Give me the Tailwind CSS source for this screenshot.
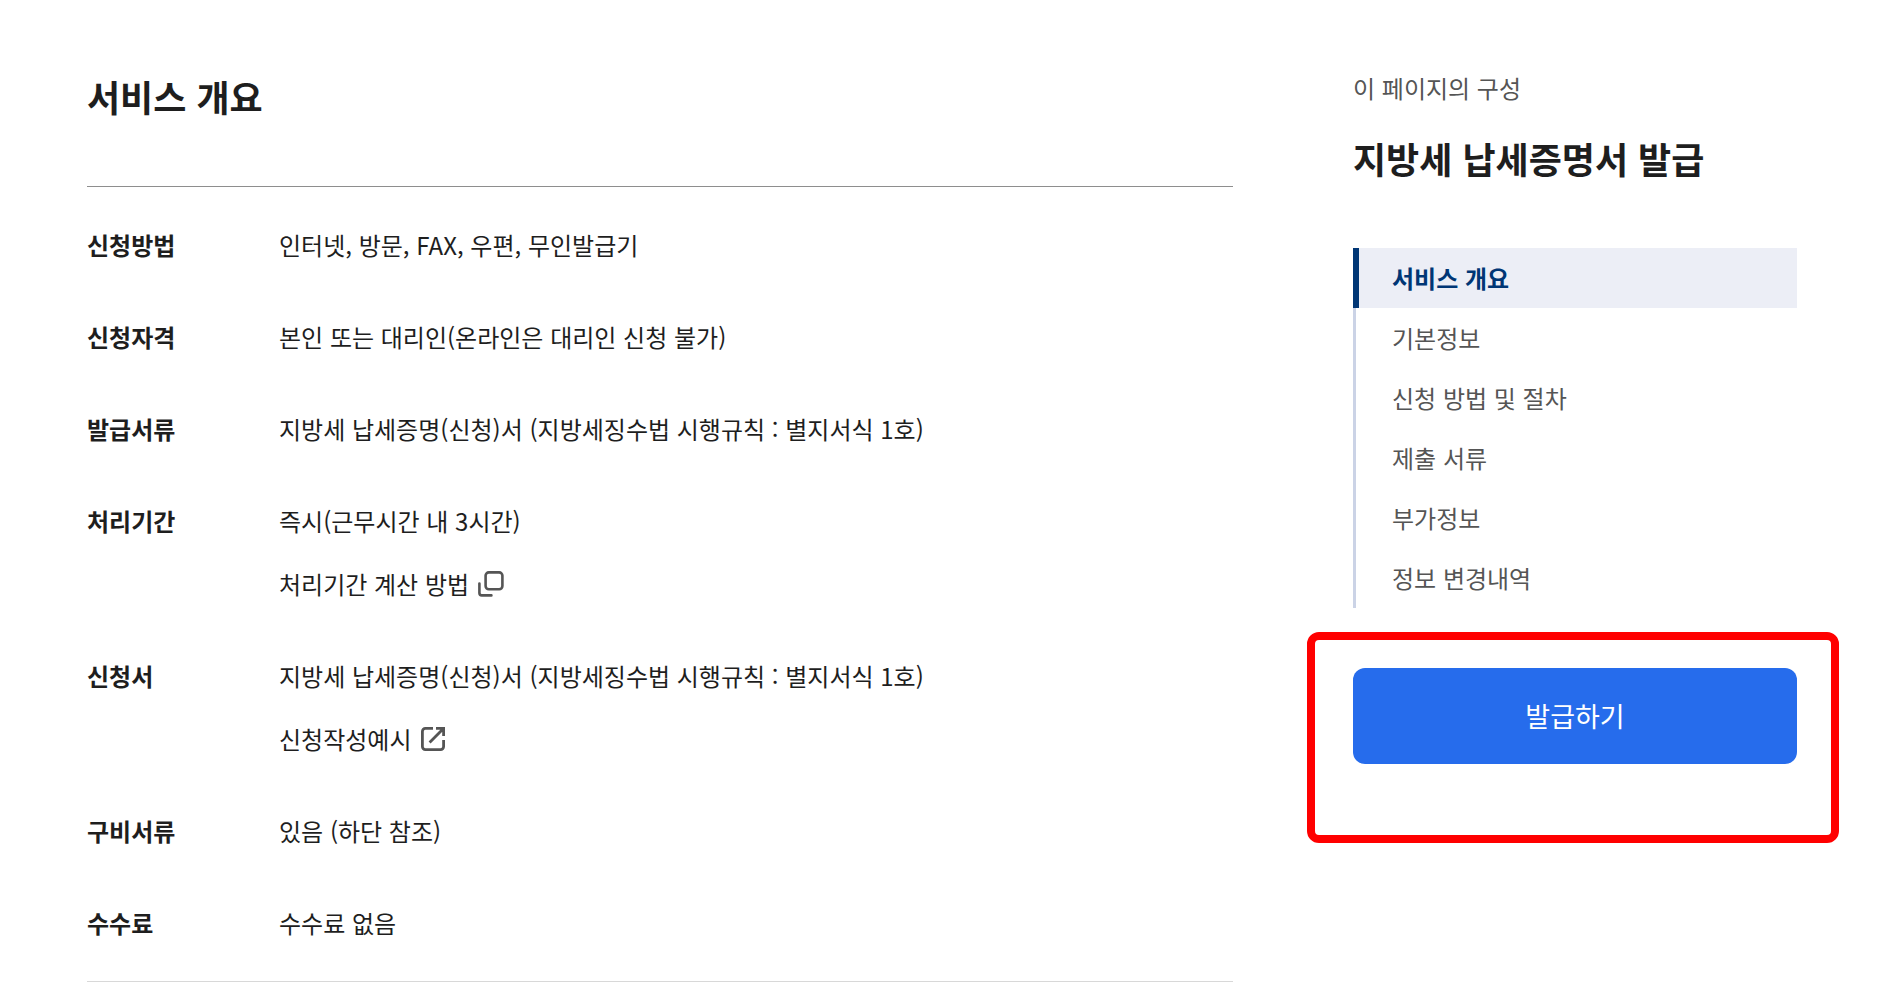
<!DOCTYPE html>
<html lang="ko">
<head>
  <meta charset="UTF-8" />
  <meta name="viewport" content="width=device-width, initial-scale=1.0"/>
  <title>지방세 납세증명서 발급</title>
  <script src="https://cdn.jsdelivr.net/npm/@tailwindcss/browser@4"></script>
</head>
<body class="bg-white text-[#1e1e1e] font-['Noto_Sans_CJK_KR',sans-serif] text-2xl leading-9">
  <div class="grid grid-cols-[minmax(0,1fr)_444px] gap-[120px] pl-[87px] pr-[93px]">

    <!-- 서비스 개요 -->
    <main class="pt-[72px]">
      <h1 class="text-4xl leading-[48px] font-bold">서비스 개요</h1>

      <dl class="mt-[66px] pt-10 pb-10 border-t border-t-[#8e8e8e] border-b border-b-[#d8d8d8] flex flex-col gap-14">
        <div class="flex">
          <dt class="w-48 shrink-0 font-bold">신청방법</dt>
          <dd>인터넷, 방문, FAX, 우편, 무인발급기</dd>
        </div>
        <div class="flex">
          <dt class="w-48 shrink-0 font-bold">신청자격</dt>
          <dd>본인 또는 대리인(온라인은 대리인 신청 불가)</dd>
        </div>
        <div class="flex">
          <dt class="w-48 shrink-0 font-bold">발급서류</dt>
          <dd>지방세 납세증명(신청)서 (지방세징수법 시행규칙 : 별지서식 1호)</dd>
        </div>
        <div class="flex">
          <dt class="w-48 shrink-0 font-bold">처리기간</dt>
          <dd class="flex flex-col items-start gap-[27px]">
            <span>즉시(근무시간 내 3시간)</span>
            <a href="#period" class="flex items-center gap-2">
              처리기간 계산 방법
              <svg class="size-7" viewBox="0 0 28 28" fill="none" stroke="#555" stroke-width="2.6" stroke-linecap="round" stroke-linejoin="round" aria-hidden="true">
                <rect x="8.6" y="2.4" width="16.8" height="16.8" rx="3.2"/>
                <path d="M2.4 13.6v9.4a2.4 2.4 0 0 0 2.4 2.4h9.6"/>
              </svg>
            </a>
          </dd>
        </div>
        <div class="flex">
          <dt class="w-48 shrink-0 font-bold">신청서</dt>
          <dd class="flex flex-col items-start gap-[27px]">
            <span>지방세 납세증명(신청)서 (지방세징수법 시행규칙 : 별지서식 1호)</span>
            <a href="#example" class="flex items-center gap-2">
              신청작성예시
              <svg class="size-7" viewBox="0 0 28 28" fill="none" stroke="#555" stroke-width="2.8" aria-hidden="true">
                <path d="M14 3.4H6.4a3 3 0 0 0-3 3v15.2a3 3 0 0 0 3 3h15.2a3 3 0 0 0 3-3V15"/>
                <path d="M17 3.4h7.6V11M24 4 10.6 17.6"/>
              </svg>
            </a>
          </dd>
        </div>
        <div class="flex">
          <dt class="w-48 shrink-0 font-bold">구비서류</dt>
          <dd>있음 (하단 참조)</dd>
        </div>
        <div class="flex">
          <dt class="w-48 shrink-0 font-bold">수수료</dt>
          <dd>수수료 없음</dd>
        </div>
      </dl>
    </main>

    <!-- 페이지 구성 -->
    <aside class="pt-[70px]">
      <p class="text-[#555]">이 페이지의 구성</p>
      <h2 class="mt-7 text-4xl leading-[48px] font-bold">지방세 납세증명서 발급</h2>

      <nav class="mt-[66px] text-[#555]">
        <a href="#summary" class="flex items-center h-[60px] pl-[33px] border-l-6 border-[#003675] bg-[#eceef6] font-bold text-[#003675]">서비스 개요</a>
        <a href="#basic" class="flex items-center h-[60px] pl-9 border-l-3 border-[#cbd3e6]">기본정보</a>
        <a href="#process" class="flex items-center h-[60px] pl-9 border-l-3 border-[#cbd3e6]">신청 방법 및 절차</a>
        <a href="#documents" class="flex items-center h-[60px] pl-9 border-l-3 border-[#cbd3e6]">제출 서류</a>
        <a href="#extra" class="flex items-center h-[60px] pl-9 border-l-3 border-[#cbd3e6]">부가정보</a>
        <a href="#history" class="flex items-center h-[60px] pl-9 border-l-3 border-[#cbd3e6]">정보 변경내역</a>
      </nav>

      <!-- 발급 버튼 강조 -->
      <div class="mt-6 -ml-[46px] -mr-[42px] pl-[38px] pr-[34px] pt-7 pb-[71px] border-8 border-[#ff0000] rounded-xl">
        <button type="button" class="w-full h-24 rounded-xl bg-[#266cec] text-white text-[27px]">발급하기</button>
      </div>
    </aside>

  </div>
</body>
</html>
